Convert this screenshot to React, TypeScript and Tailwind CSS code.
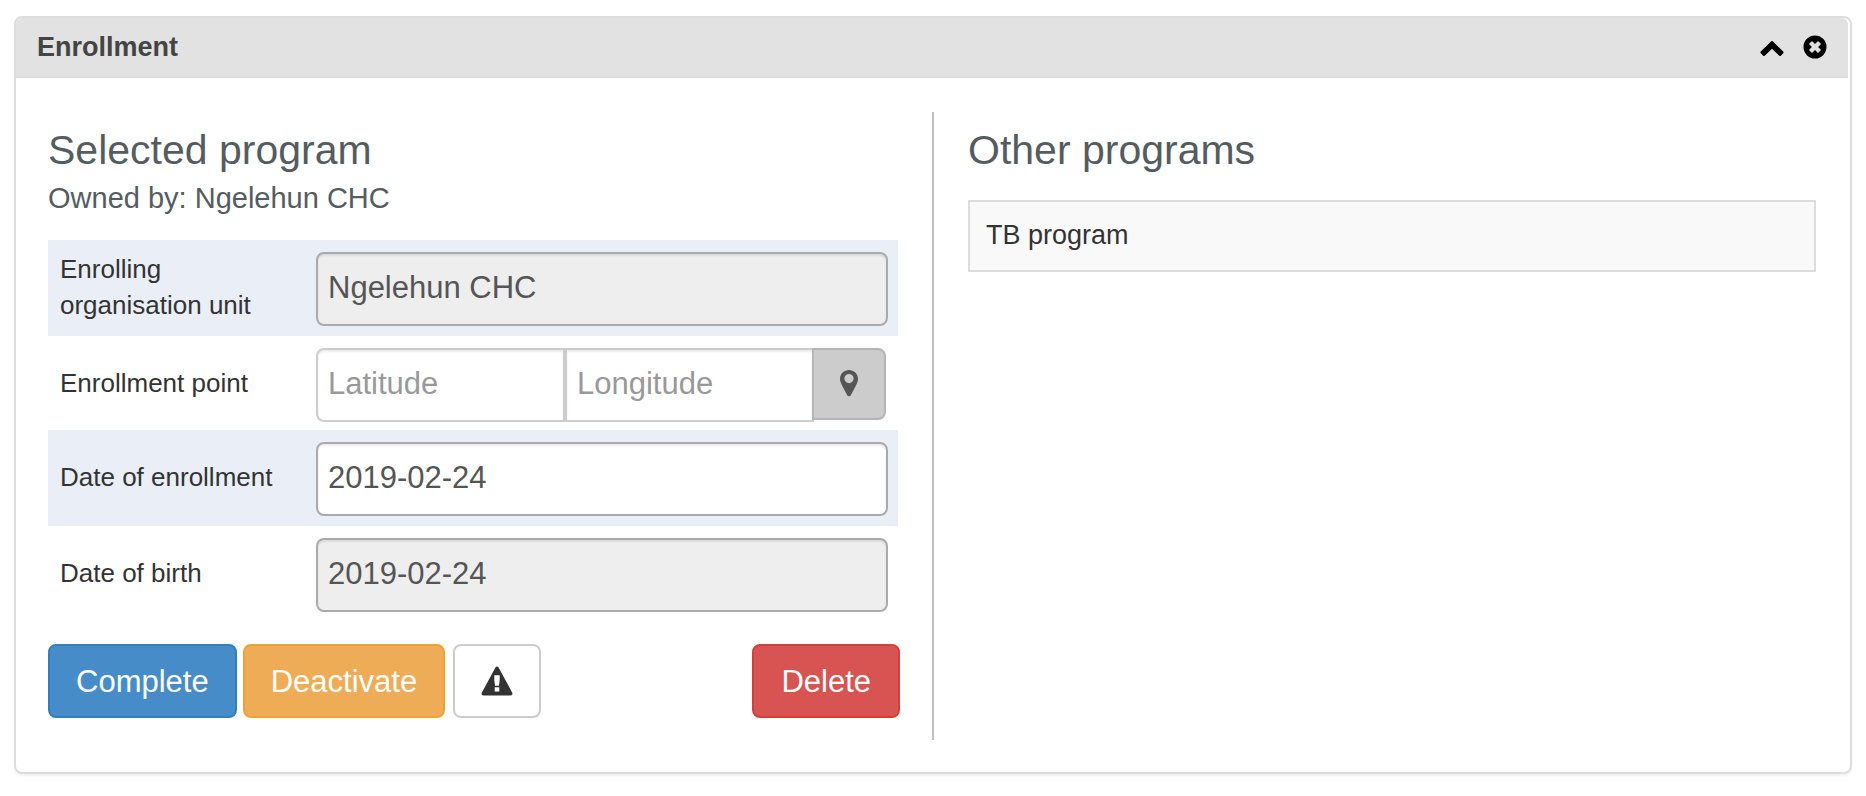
import { useId } from "react";
import type { ReactNode } from "react";

const fieldBase =
  "h-[74px] min-w-0 border-2 pl-[10px] pr-[10px] pb-[2px] text-[31px] text-[#555] shadow-[inset_0_2px_2px_rgba(0,0,0,0.075)] outline-none placeholder:text-[#999] placeholder:opacity-100";
const buttonBase =
  "flex h-[74px] items-center justify-center rounded-lg border-2 text-[31px] leading-[44px]";

function FormRow({
  label,
  htmlFor,
  striped = false,
  children,
}: {
  label: string;
  htmlFor: string;
  striped?: boolean;
  children: ReactNode;
}) {
  return (
    <div
      className={
        striped
          ? "flex items-center bg-[#eaeff7] pt-3 pr-[10px] pb-[10px] pl-3"
          : "flex items-center bg-white pt-3 pr-[10px] pb-[10px] pl-3"
      }
    >
      <label
        htmlFor={htmlFor}
        className="-my-3 w-64 shrink-0 pr-8 pb-1 text-[26px] leading-[36px] text-[#333]"
      >
        {label}
      </label>
      {children}
    </div>
  );
}

function TextField({
  id,
  value,
  disabled = false,
}: {
  id: string;
  value: string;
  disabled?: boolean;
}) {
  return (
    <input
      id={id}
      type="text"
      defaultValue={value}
      disabled={disabled}
      className={`${fieldBase} flex-1 rounded-lg border-[#aaa] bg-white disabled:bg-[#eee]`}
    />
  );
}

function ChevronUpIcon() {
  return (
    <svg width="24" height="18" viewBox="0 0 24 18" fill="currentColor" aria-hidden="true">
      <path d="M12.7 1.3 23.2 11.6Q24 12.4 23.2 13.2L20.9 15.7Q20.1 16.5 19.3 15.7L12 8.7 4.7 15.7Q3.9 16.5 3.1 15.7L.8 13.2Q0 12.4.8 11.6L11.3 1.3Q12 .6 12.7 1.3Z" />
    </svg>
  );
}

function RemoveIcon() {
  return (
    <svg width="24" height="24" viewBox="0 0 24 24" aria-hidden="true">
      <path
        fill="currentColor"
        fillRule="evenodd"
        d="M12 .5A11.5 11.5 0 1 1 12 23.5A11.5 11.5 0 1 1 12 .5ZM8.5 6.400 6.400 8.500Q5.900 9 6.400 9.500L8.900 12 6.400 14.500Q5.900 15 6.400 15.500L8.500 17.600Q9 18.100 9.500 17.600L12 15.100 14.500 17.600Q15 18.100 15.500 17.600L17.600 15.500Q18.100 15 17.600 14.500L15.100 12 17.600 9.500Q18.100 9 17.600 8.500L15.500 6.400Q15 5.900 14.500 6.400L12 8.900 9.500 6.400Q9 5.900 8.500 6.400Z"
      />
    </svg>
  );
}

function MarkerIcon() {
  return (
    <svg width="18" height="28" viewBox="0 0 18 28" aria-hidden="true">
      <path
        fill="currentColor"
        fillRule="evenodd"
        d="M9 1C13.9 1 18 4.900 18 9.800C18 12.600 16.700 15 15.300 17.700L10.800 26.200Q10.300 27.200 9 27.200T7.200 26.200L2.700 17.700C1.300 15 0 12.600 0 9.800C0 4.900 4.100 1 9 1ZM9 5A4.600 4.600 0 1 0 9 14.200A4.600 4.600 0 1 0 9 5Z"
      />
    </svg>
  );
}

function WarningIcon() {
  return (
    <svg width="32" height="30" viewBox="0 0 32 30" aria-hidden="true">
      <path
        fill="currentColor"
        fillRule="evenodd"
        d="M17.600 1.500 31.100 26.400Q31.800 27.700 31.200 28.600T29.400 29.500H2.600Q1.400 29.500.8 28.600T.9 26.400L14.400 1.500Q15 .5 16 .5T17.600 1.500ZM13.300 9.300V14L14 19.800H18L18.700 14V9.300ZM13.700 21.300V25.500H18.300V21.300Z"
      />
    </svg>
  );
}

export default function App() {
  const id = useId();
  return (
    <main className="bg-white pt-4 pr-[14px] pb-[22px] pl-[14px] font-['Liberation_Sans',Arial,sans-serif]">
      <section className="rounded-lg border-2 border-[#ddd] bg-white shadow-[0_2px_2px_rgba(0,0,0,0.05)]">
        <header className="mr-[2px] flex h-[60px] items-center justify-between rounded-t-md border-b-2 border-[#ddd] bg-[#e2e2e2] pr-[21px] pl-[21px]">
          <h1 className="text-[27px] leading-[36px] font-bold text-[#444]">Enrollment</h1>
          <div className="flex items-center gap-[19px] text-black">
            <button type="button" aria-label="Collapse" className="pt-1">
              <ChevronUpIcon />
            </button>
            <button type="button" aria-label="Close">
              <RemoveIcon />
            </button>
          </div>
        </header>

        <div className="flex pt-[34px] pb-8">
          <div className="w-[calc(50%+1px)] shrink-0 border-r-2 border-[#c0c0c0] pt-[15px] pr-8 pb-[22px] pl-8">
            <h2 className="text-[41px] leading-[46px] text-[#555c61]">Selected program</h2>
            <p className="mt-[7px] text-[29px] leading-[36px] text-[#555c61]">
              Owned by: Ngelehun CHC
            </p>

            <form onSubmit={(event) => event.preventDefault()}>
              <div className="mt-6 mr-[2px]">
                <FormRow label="Enrolling organisation unit" htmlFor={`${id}-unit`} striped>
                  <TextField id={`${id}-unit`} value="Ngelehun CHC" disabled />
                </FormRow>

                <div className="-mb-[2px]">
                  <FormRow label="Enrollment point" htmlFor={`${id}-latitude`}>
                    <div className="flex min-w-0 flex-1 items-start pr-[2px]">
                      <input
                        id={`${id}-latitude`}
                        type="text"
                        placeholder="Latitude"
                        className={`${fieldBase} flex-1 rounded-l-lg border-[#ccc] bg-white`}
                      />
                      <input
                        type="text"
                        placeholder="Longitude"
                        aria-label="Longitude"
                        className={`${fieldBase} flex-1 border-[#ccc] bg-white`}
                      />
                      <button
                        type="button"
                        aria-label="Pick on map"
                        className="-ml-[2px] flex h-[72px] w-[74px] shrink-0 items-center justify-center rounded-r-lg border-2 border-[#b5b5b5] bg-[#ccc] pb-[2px] text-[#555]"
                      >
                        <MarkerIcon />
                      </button>
                    </div>
                  </FormRow>
                </div>

                <FormRow label="Date of enrollment" htmlFor={`${id}-enrolled`} striped>
                  <TextField id={`${id}-enrolled`} value="2019-02-24" />
                </FormRow>

                <FormRow label="Date of birth" htmlFor={`${id}-birth`}>
                  <TextField id={`${id}-birth`} value="2019-02-24" disabled />
                </FormRow>
              </div>

              <div className="mt-[22px] flex items-center">
                <button
                  type="button"
                  className={`${buttonBase} border-[#357ebd] bg-[#468cc8] px-[26px] pt-[2px] text-white`}
                >
                  Complete
                </button>
                <button
                  type="button"
                  className={`${buttonBase} ml-[6px] border-[#eea236] bg-[#efac57] px-[26px] pt-[2px] text-white`}
                >
                  Deactivate
                </button>
                <button
                  type="button"
                  aria-label="Mark for follow-up"
                  className={`${buttonBase} ml-2 w-[88px] border-[#ccc] bg-white text-[#333]`}
                >
                  <WarningIcon />
                </button>
                <button
                  type="button"
                  className={`${buttonBase} ml-auto border-[#d43f3a] bg-[#d85452] px-[27px] pt-[2px] text-white`}
                >
                  Delete
                </button>
              </div>
            </form>
          </div>

          <div className="min-w-0 flex-1 px-[34px] pt-[15px]">
            <h2 className="text-[41px] leading-[46px] text-[#555c61]">Other programs</h2>
            <ul className="mt-[27px]">
              <li className="border-2 border-[#ddd] bg-[#f9f9f9] px-4 pt-[15px] pb-[17px] text-[27px] leading-[36px] text-[#333]">
                TB program
              </li>
            </ul>
          </div>
        </div>
      </section>
    </main>
  );
}
